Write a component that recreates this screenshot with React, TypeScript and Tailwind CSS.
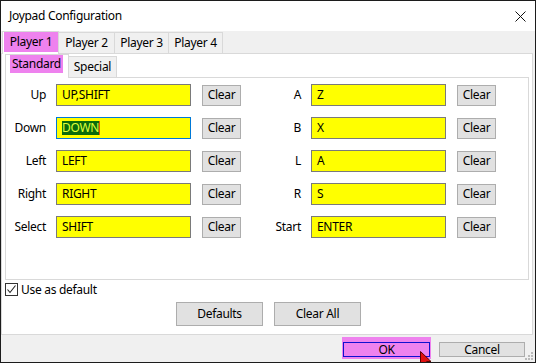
const font = { fontFamily: '"Noto Sans", "Open Sans", sans-serif' }

const rows = [
  { l: 'Up', lv: 'UP,SHIFT', r: 'A', rv: 'Z' },
  { l: 'Down', lv: 'DOWN', r: 'B', rv: 'X' },
  { l: 'Left', lv: 'LEFT', r: 'L', rv: 'A' },
  { l: 'Right', lv: 'RIGHT', r: 'R', rv: 'S' },
  { l: 'Select', lv: 'SHIFT', r: 'Start', rv: 'ENTER' },
]

function KeyBox({ value, focused }: { value: string; focused?: boolean }) {
  return (
    <div
      className={`w-[135px] h-[22px] border bg-[#ffff00] pl-[5px] flex items-center text-black ${
        focused ? 'border-[#0078d7]' : 'border-[#7a7a7a]'
      }`}
    >
      {focused ? (
        <span className="bg-[#0b6b0b] text-[#dfff3a] leading-[14px] border-r border-[#e05a00]">{value}</span>
      ) : (
        value
      )}
    </div>
  )
}

function ClearButton() {
  return (
    <button className="w-[39px] h-[21px] border border-[#adadad] bg-[#e1e1e1] flex items-center justify-center text-black">
      Clear
    </button>
  )
}

export default function App() {
  return (
    <div
      className="relative w-[536px] h-[363px] border border-[#1c1c1c] bg-[#f0f0f0] flex flex-col overflow-hidden text-[12px] tracking-[-0.3px] text-black"
      style={font}
    >
      {/* Title bar */}
      <div className="h-[30px] bg-white flex items-center justify-between pl-[8px] pr-[9px]">
        <span className="text-[12px]">Joypad Configuration</span>
        <svg width="11" height="11" viewBox="0 0 11 11">
          <path d="M0.5 0.5 L10.5 10.5 M10.5 0.5 L0.5 10.5" stroke="#111" strokeWidth="1" />
        </svg>
      </div>

      {/* Player tabs */}
      <div className="h-[22px] flex items-end pl-[1px]">
        <div className="h-[23px] w-[57px] border border-b-0 border-[#d9d9d9] bg-white pl-[1px] relative z-10 -mb-px">
          <div className="h-[20px] w-[54px] bg-[#ee82ee] flex items-center justify-center">Player 1</div>
        </div>
        {['Player 2', 'Player 3', 'Player 4'].map((p, i) => (
          <div
            key={p}
            className={`h-[21px] border border-b-0 border-[#d9d9d9] bg-[#f0f0f0] flex items-center justify-center -ml-px ${
              i === 0 ? 'w-[57px]' : 'w-[55px]'
            }`}
          >
            {p}
          </div>
        ))}
      </div>

      {/* Outer panel */}
      <div className="w-[532px] h-[282px] border border-[#d9d9d9] bg-white flex flex-col">
        {/* Inner tabs */}
        <div className="h-[23px] flex items-end pl-[3px]">
          <div className="h-[24px] w-[64px] border border-b-0 border-[#d9d9d9] bg-white pl-[4px] relative z-10 -mb-px">
            <div className="h-[18px] w-[53px] bg-[#ee82ee] flex items-center justify-center">Standard</div>
          </div>
          <div className="h-[21px] w-[49px] border border-b-0 border-[#d9d9d9] bg-[#f0f0f0] flex items-center justify-center -ml-px">
            Special
          </div>
        </div>

        {/* Inner panel */}
        <div className="ml-[3px] w-[524px] h-[203px] border border-[#d9d9d9] bg-white pt-[6px] flex flex-col gap-[11px]">
          {rows.map(r => (
            <div key={r.l} className="flex items-center h-[22px]">
              <span className="w-[40px] text-right">{r.l}</span>
              <div className="ml-[10px]">
                <KeyBox value={r.lv} focused={r.l === 'Down'} />
              </div>
              <div className="ml-[11px]">
                <ClearButton />
              </div>
              <span className="w-[60px] text-right">{r.r}</span>
              <div className="ml-[10px]">
                <KeyBox value={r.rv} />
              </div>
              <div className="ml-[11px]">
                <ClearButton />
              </div>
            </div>
          ))}
        </div>

        {/* Use as default */}
        <div className="mt-[3px] ml-[3px] flex items-center h-[13px]">
          <div className="w-[13px] h-[13px] border border-[#333] bg-white flex items-center justify-center">
            <svg width="11" height="11" viewBox="0 0 11 11">
              <path d="M1.5 5.5 L4 8.5 L9.5 1.5" stroke="#222" strokeWidth="1.1" fill="none" />
            </svg>
          </div>
          <span className="ml-[3px]">Use as default</span>
        </div>

        {/* Defaults / Clear All */}
        <div className="mt-[6px] ml-[174px] flex gap-[11px]">
          <button className="w-[87px] h-[24px] border border-[#adadad] bg-[#e1e1e1] flex items-center justify-center">
            Defaults
          </button>
          <button className="w-[87px] h-[24px] border border-[#adadad] bg-[#e1e1e1] flex items-center justify-center">
            Clear All
          </button>
        </div>
      </div>

      {/* OK / Cancel */}
      <div className="flex-1 flex justify-end items-start pr-[10px]">
        <div className="mt-[2px] w-[89px] h-[22px] bg-[#ee82ee] pt-[5px] px-[1px]">
          <div className="h-[15px] border border-[#1010d0] flex items-center justify-center">OK</div>
        </div>
        <button className="mt-[7px] ml-[8px] w-[86px] h-[15px] border border-[#adadad] bg-[#e1e1e1] flex items-center justify-center">
          Cancel
        </button>
      </div>

      {/* Size grip */}
      <svg className="absolute right-[1px] bottom-[1px]" width="10" height="10" viewBox="0 0 10 10">
        {[
          [7, 1],
          [4, 4],
          [7, 4],
          [1, 7],
          [4, 7],
          [7, 7],
        ].map(([x, y]) => (
          <rect key={`${x}-${y}`} x={x} y={y} width="2" height="2" fill="#b9b9b9" />
        ))}
      </svg>

      {/* Mouse cursor */}
      <svg className="absolute left-[419px] top-[350px]" width="14" height="20" viewBox="0 0 14 20">
        <path d="M0.5 0.5 L0.5 15 L4 11.5 L6.5 17.5 L9 16.5 L6.5 10.5 L11 10.5 Z" fill="#e01010" stroke="#5a0000" strokeWidth="1" />
      </svg>
    </div>
  )
}
